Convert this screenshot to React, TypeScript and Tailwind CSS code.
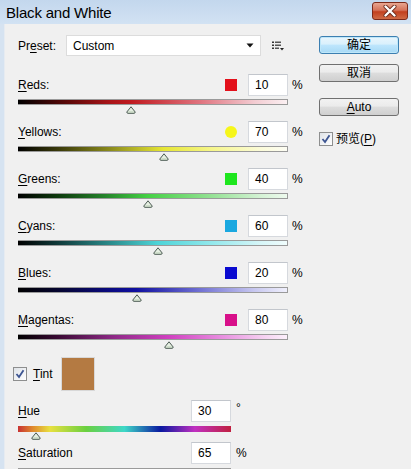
import React from 'react';

type Row = {
  key: string;
  u: string;
  rest: string;
  swatch: string;
  value: number;
  grad: string;
};

const rows: Row[] = [
  { key: 'reds', u: 'R', rest: 'eds:', swatch: 'bg-[#e3101b]', value: 10, grad: 'bg-[linear-gradient(to_right,#000_0%,#5a0808_18%,#a81418_34%,#c01a20_42%,#e07580_68%,#f3ccd2_88%,#fbf0f2_100%)]' },
  { key: 'yellows', u: 'Y', rest: 'ellows:', swatch: 'bg-[#f6f61a] rounded-full', value: 70, grad: 'bg-[linear-gradient(to_right,#000_0%,#3a3a0a_15%,#8a8a1c_34%,#e6e634_54%,#f6f68a_72%,#fbfbd8_90%,#fdfdf4_100%)]' },
  { key: 'greens', u: 'G', rest: 'reens:', swatch: 'bg-[#1ee61e]', value: 40, grad: 'bg-[linear-gradient(to_right,#000_0%,#0d3a0d_15%,#24822a_32%,#44d044_48%,#8ee08e_70%,#d4f2d4_90%,#eefaee_100%)]' },
  { key: 'cyans', u: 'C', rest: 'yans:', swatch: 'bg-[#1aa8e0]', value: 60, grad: 'bg-[linear-gradient(to_right,#000_0%,#0f3a3a_15%,#2a8a8a_34%,#4ed4d8_52%,#92e8ec_72%,#d6f6f8_90%,#f0fcfc_100%)]' },
  { key: 'blues', u: 'B', rest: 'lues:', swatch: 'bg-[#0a0ad0]', value: 20, grad: 'bg-[linear-gradient(to_right,#000_0%,#050530_15%,#0a0a80_34%,#1010a0_44%,#6a6ad0_66%,#c8c8f0_88%,#f0f0fc_100%)]' },
  { key: 'magentas', u: 'M', rest: 'agentas:', swatch: 'bg-[#d8108a]', value: 80, grad: 'bg-[linear-gradient(to_right,#000_0%,#3a0a34_15%,#902a88_36%,#d040c0_56%,#e890e0_76%,#f6d4f2_92%,#fcf0fb_100%)]' },
];

function Thumb() {
  return (
    <svg width="10" height="8" viewBox="0 0 10 8" className="block">
      <path d="M5 0.8 L9.2 6 Q9.2 7.3 8 7.3 L2 7.3 Q0.8 7.3 0.8 6 Z" fill="#e6efe2" stroke="#4a5a52" strokeWidth="1" />
      <path d="M2.2 6 L7.8 6" stroke="#b8ccb4" strokeWidth="1" />
    </svg>
  );
}

function Check() {
  return (
    <div className="w-[14px] h-[14px] border border-[#8e8f8f] bg-[linear-gradient(135deg,#dfe3e8,#ffffff)] flex items-center justify-center">
      <svg width="10" height="10" viewBox="0 0 10 10">
        <path d="M1.5 5 L4 8 L8.5 1.2" fill="none" stroke="#3d5592" strokeWidth="1.8" />
      </svg>
    </div>
  );
}

function Field({ v }: { v: number }) {
  return (
    <div className="w-[40px] h-[22px] bg-white border border-[#d6d9de] border-t-[#c2c6cc] flex items-center pl-[6px]">
      {v}
    </div>
  );
}

function Btn({ children, main }: { children: React.ReactNode; main?: boolean }) {
  return (
    <div
      className={
        main
          ? 'w-[80px] h-[18px] rounded-[3px] border border-[#3c7fb1] bg-[linear-gradient(to_bottom,#eaf6fd_0%,#d9f0fc_45%,#bee6fd_50%,#a7d9f5_100%)] shadow-[inset_0_0_0_1px_#bfe7f9] flex items-center justify-center'
          : 'w-[80px] h-[18px] rounded-[3px] border border-[#707070] bg-[linear-gradient(to_bottom,#f2f2f2_0%,#ebebeb_45%,#dddddd_50%,#cfcfcf_100%)] flex items-center justify-center'
      }
    >
      {children}
    </div>
  );
}

export default function App() {
  return (
    <div className="w-[411px] h-[469px] overflow-hidden bg-[#f0f0f0] text-[12px] leading-none text-black font-['Liberation_Sans','Noto_Sans_CJK_SC',sans-serif]">
      {/* Title bar */}
      <div className="h-[24px] flex items-center justify-between pl-[6px] pr-[3px] bg-[linear-gradient(to_bottom,#c3d7ed,#d2e2f3)]">
        <span className="text-[15px] tracking-[-0.2px]">Black and White</span>
        <div className="w-[36px] h-[18px] mt-[-2px] rounded-[3px] border border-[#7c2a1a] bg-[linear-gradient(to_bottom,#e8a691_0%,#d5735a_45%,#c2401f_55%,#cf6a45_100%)] flex items-center justify-center">
          <svg width="14" height="12" viewBox="0 0 14 12">
            <path d="M2.5 1.5 L11.5 10.5 M11.5 1.5 L2.5 10.5" stroke="#6a2a1c" strokeWidth="4" strokeLinecap="round" />
            <path d="M2.5 1.5 L11.5 10.5 M11.5 1.5 L2.5 10.5" stroke="#ffffff" strokeWidth="2.4" strokeLinecap="round" />
          </svg>
        </div>
      </div>

      <div className="flex h-[445px] border-l-[4px] border-[#d6e3f1]">
        <div className="w-[315px] pl-[13px] border-l border-[#e6ebf1]">
          {/* Preset */}
          <div className="mt-[11px] h-[21px] flex items-center">
            <span className="w-[48px]">
              Pr<span className="underline underline-offset-2">e</span>set:
            </span>
            <div className="w-[195px] h-[21px] bg-white border border-[#dcdcdc] flex items-center justify-between pl-[6px] pr-[6px]">
              <span>Custom</span>
              <svg width="8" height="5" viewBox="0 0 8 5">
                <path d="M0.5 0.5 L7.5 0.5 L4 4.5 Z" fill="#111" />
              </svg>
            </div>
            <svg width="12" height="10" viewBox="0 0 12 10" className="ml-[11px]">
              <rect x="0" y="0.5" width="2" height="1.5" fill="#333" />
              <rect x="3" y="0.5" width="6" height="1.5" fill="#555" />
              <rect x="0" y="3.5" width="2" height="1.5" fill="#333" />
              <rect x="3" y="3.5" width="6" height="1.5" fill="#555" />
              <rect x="0" y="6.5" width="2" height="1.5" fill="#333" />
              <rect x="3" y="6.5" width="4" height="1.5" fill="#555" />
              <path d="M8 7 L12 7 L10 9.5 Z" fill="#222" />
            </svg>
          </div>

          {/* Color sliders */}
          <div className="mt-[18px]">
            {rows.map((r) => (
              <div key={r.key} className="h-[47px]">
                <div className="h-[22px] flex items-center">
                  <div className="w-[270px] flex items-center">
                    <span className="flex-1">
                      <span className="underline underline-offset-2">{r.u}</span>
                      {r.rest}
                    </span>
                    <div className={`w-[12px] h-[12px] mr-[11px] ${r.swatch}`} />
                    <Field v={r.value} />
                  </div>
                  <span className="ml-[4px]">%</span>
                </div>
                <div className={`relative mt-[3px] w-[270px] h-[6px] border-r border-y border-[#9a9a9a] ${r.grad}`}>
                  <div className="absolute top-[6px]" style={{ left: ((r.value + 200) / 500) * 270 - 5 }}>
                    <Thumb />
                  </div>
                </div>
              </div>
            ))}
          </div>

          {/* Tint */}
          <div className="mt-[1px] h-[34px] flex items-center">
            <div className="ml-[-5px]">
              <Check />
            </div>
            <span className="ml-[6px]">
              <span className="underline underline-offset-2">T</span>int
            </span>
            <div className="ml-[8px] w-[34px] h-[34px] bg-[#b47a42] border border-[#d8d8d8]" />
          </div>

          {/* Hue */}
          <div className="mt-[9px] h-[22px] flex items-center">
            <div className="w-[213px] flex items-center">
              <span className="flex-1">
                <span className="underline underline-offset-2">H</span>ue
              </span>
              <Field v={30} />
            </div>
            <span className="ml-[5px] mt-[-6px]">°</span>
          </div>
          <div className="relative mt-[4px] w-[213px] h-[6px] bg-[linear-gradient(to_right,#c83232_0%,#e08a2e_7%,#e8e040_15%,#6ad040_32%,#3ed8c8_50%,#0a18a0_67%,#c030c0_83%,#c02040_100%)]">
            <div className="absolute top-[6px]" style={{ left: (30 / 360) * 213 - 5 }}>
              <Thumb />
            </div>
          </div>

          {/* Saturation */}
          <div className="mt-[10px] h-[22px] flex items-center">
            <div className="w-[213px] flex items-center">
              <span className="flex-1">
                <span className="underline underline-offset-2">S</span>aturation
              </span>
              <Field v={65} />
            </div>
            <span className="ml-[5px]">%</span>
          </div>
          <div className="mt-[4px] w-[213px] h-[6px] border border-[#9a9a9a] bg-[linear-gradient(to_right,#e8e0e0_0%,#d89090_50%,#c02020_100%)]" />
        </div>

        {/* Buttons */}
        <div className="w-[80px] pt-[12px] flex flex-col">
          <Btn main>确定</Btn>
          <div className="mt-[10px]">
            <Btn>取消</Btn>
          </div>
          <div className="mt-[16px]">
            <Btn>
              <span>
                <span className="underline underline-offset-2">A</span>uto
              </span>
            </Btn>
          </div>
          <div className="mt-[16px] flex items-center">
            <Check />
            <span className="ml-[3px]">
              预览(<span className="underline underline-offset-2">P</span>)
            </span>
          </div>
        </div>
      </div>
    </div>
  );
}
